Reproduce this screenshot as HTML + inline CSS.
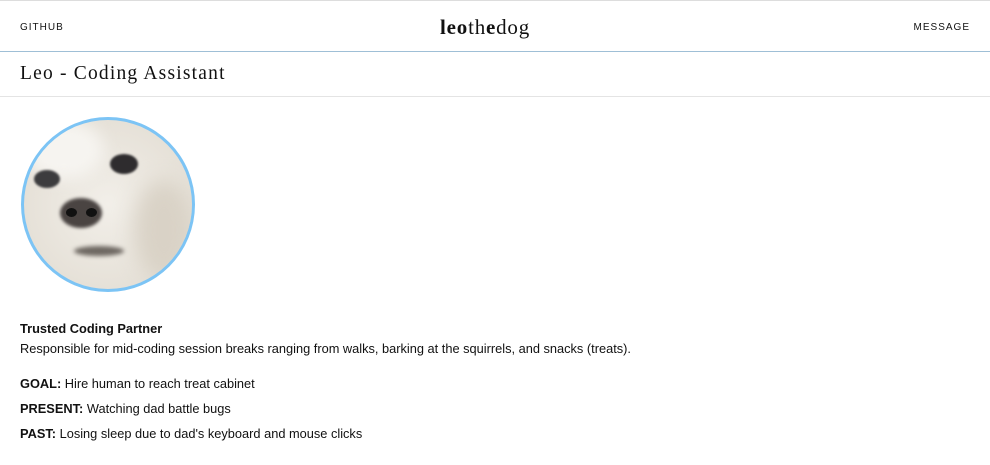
<!DOCTYPE html>
<html><head><style>
*{margin:0;padding:0;box-sizing:border-box}
body{width:990px;height:465px;background:#fff;font-family:"Liberation Sans",sans-serif;color:#111;overflow:hidden;position:relative}
.top{position:absolute;top:0;left:0;width:990px;height:1px;background:#ddd}
.nav{position:absolute;top:1px;left:0;width:990px;height:51px;border-bottom:1px solid #9fbfd6}
.nav .l{position:absolute;left:20px;top:21px;font-size:10px;letter-spacing:1px}
.nav .r{position:absolute;right:20px;top:21px;font-size:10px;letter-spacing:1px}
.logo{position:absolute;left:440px;top:14px;font-family:"Liberation Serif",serif;font-size:21px;letter-spacing:0.8px}
.title{position:absolute;top:52px;left:0;width:990px;height:45px;border-bottom:1px solid #e4e4e4}
.title span{position:absolute;left:20px;top:11px;font-family:"Liberation Serif",serif;font-size:19.5px;letter-spacing:1.2px}
.av{position:absolute;left:21px;top:117px;width:174px;height:175px;border-radius:50%;border:3px solid #7cc4f5;overflow:hidden;background:radial-gradient(circle at 50% 50%,#f2efe9,#e6e1d8 70%,#d8d2c6)}
.b{position:absolute;border-radius:50%}
p{position:absolute;left:20px;font-size:12.8px}
</style></head><body>
<div class="top"></div>
<div class="nav"><span class="l">GITHUB</span><div class="logo"><b>leo</b>th<b>e</b>dog</div><span class="r">MESSAGE</span></div>
<div class="title"><span>Leo - Coding Assistant</span></div>
<div class="av">
<div class="b" style="left:0;top:0;width:80px;height:60px;background:#f6f4f0;filter:blur(8px)"></div>
<div class="b" style="left:110px;top:60px;width:60px;height:100px;background:#d9d2c6;filter:blur(10px)"></div>
<div class="b" style="left:10px;top:50px;width:26px;height:18px;background:#3c3c3e;filter:blur(1px)"></div>
<div class="b" style="left:86px;top:34px;width:28px;height:20px;background:#2e2c2e;filter:blur(1px)"></div>
<div class="b" style="left:36px;top:78px;width:42px;height:30px;background:#4a4442;filter:blur(1.5px)"></div>
<div class="b" style="left:42px;top:88px;width:11px;height:9px;background:#111"></div>
<div class="b" style="left:62px;top:88px;width:11px;height:9px;background:#111"></div>
<div class="b" style="left:50px;top:126px;width:50px;height:10px;background:#6e6862;filter:blur(2px)"></div>
</div>
<p style="top:321px;font-weight:bold">Trusted Coding Partner</p>
<p style="top:341px">Responsible for mid-coding session breaks ranging from walks, barking at the squirrels, and snacks (treats).</p>
<p style="top:376px"><b>GOAL:</b> Hire human to reach treat cabinet</p>
<p style="top:401px"><b>PRESENT:</b> Watching dad battle bugs</p>
<p style="top:426px"><b>PAST:</b> Losing sleep due to dad's keyboard and mouse clicks</p>
</body></html>
